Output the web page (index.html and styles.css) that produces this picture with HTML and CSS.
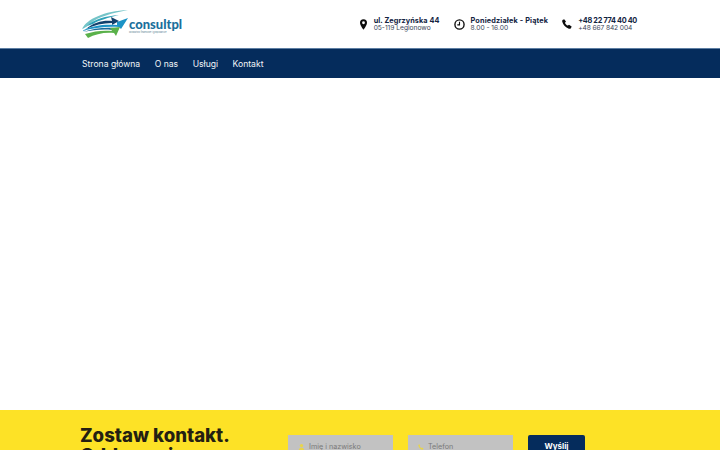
FILE: index.html
```html
<!DOCTYPE html>
<html lang="pl">
<head>
<meta charset="utf-8">
<title>consultpl</title>
<link rel="stylesheet" href="styles.css">
</head>
<body>
<header class="top">
  <a class="logo" href="#">
    <svg class="logo-mark" width="46" height="28" viewBox="0 0 46 28">
      <path d="M0 19C5 9 22 1 46 0C30 3 16 7 9 13C6 16 3 18 0 19Z" fill="#74c4c8"/>
      <path d="M5 16C12 9 24 6 37 5C26 8 17 10 11 14Z" fill="#2fa2b8"/>
      <path d="M4 19C12 12 22 10 30 11L29 7L37 11L30 15L30 13C21 13 12 15 4 19Z" fill="#12406c"/>
      <path d="M0 21C10 15 24 14 35 15L35 12L46 8L39 19L37 17C25 16 11 18 0 21Z" fill="#1c93c6"/>
      <path d="M1 22C11 18 24 17 33 18L30 20C21 19 11 20 1 22Z" fill="#1b6a98"/>
      <path d="M3 24C12 21 22 20 30 21L28 18L38 17L34 26L32 23C23 22 13 24 6 28C5 27 4 25 3 24Z" fill="#5ab14a"/>
    </svg>
    <span class="logo-text">
      <span class="logo-name">consultpl</span>
      <span class="logo-tag">doradztwo finansowe i gospodarcze</span>
    </span>
  </a>
  <div class="contacts">
    <div class="contact">
      <svg class="ico" width="7" height="11" viewBox="0 0 8 12"><path fill-rule="evenodd" d="M4 0a4 4 0 0 0-4 4c0 3 4 8 4 8s4-5 4-8a4 4 0 0 0-4-4Zm0 2.4a1.6 1.6 0 1 1 0 3.2 1.6 1.6 0 0 1 0-3.2Z" fill="#0d0d0d"/></svg>
      <div class="contact-text"><strong class="label label-first">ul. Zegrzyńska 44</strong><span>05-119 Legionowo</span></div>
    </div>
    <div class="contact">
      <svg class="ico" width="11" height="11" viewBox="0 0 12 12"><circle cx="6" cy="6" r="5" fill="none" stroke="#0d0d0d" stroke-width="1.5"/><path d="M6 3V6.4H3.6" fill="none" stroke="#0d0d0d" stroke-width="1.2"/></svg>
      <div class="contact-text"><strong class="label label-wide">Poniedziałek - Piątek</strong><span>8.00 - 16.00</span></div>
    </div>
    <div class="contact">
      <svg class="ico" width="10" height="10" viewBox="0 0 12 12"><path d="M2.6 .2 4.8 3 3.6 4.4C4.1 5.9 5.4 7.2 7.1 7.9L8.4 6.8l3.2 2.2-.9 2C10 11.7 9 11.8 8.2 11.6 4.4 10.6 1.3 7 .3 3.4.1 2.6.2 1.7.6 1.1Z" fill="#0d0d0d"/></svg>
      <div class="contact-text"><strong class="label label-tight">+48 22 774 40 40</strong><span class="sub-tight">+48 667 842 004</span></div>
    </div>
  </div>
</header>
<nav class="nav">
  <a href="#">Strona główna</a>
  <a href="#">O nas</a>
  <a href="#">Usługi</a>
  <a href="#">Kontakt</a>
</nav>
<main class="blank"></main>
<section class="cta">
  <h2 class="cta-title">Zostaw kontakt.<br>Oddzwonimy</h2>
  <form class="cta-form">
    <label class="field">
      <svg width="7" height="8" viewBox="0 0 10 10"><circle cx="5" cy="3" r="2.4" fill="#e8d44a"/><path d="M1 10c0-3 2-4 4-4s4 1 4 4Z" fill="#e8d44a"/></svg>
      <span>Imię i nazwisko</span>
    </label>
    <label class="field">
      <svg width="6" height="8" viewBox="0 0 12 12"><path d="M2.6 .6 4.4 3 3.4 4.4C3.9 5.9 5.2 7.4 6.9 8.1L8.2 7l2.6 1.9-.7 2C9.8 11.5 9 11.6 8.2 11.4 4.6 10.4 1.5 7 .7 3.4.5 2.6.6 1.9 1 1.3Z" fill="#e8d44a"/></svg>
      <span>Telefon</span>
    </label>
    <button class="send" type="button">Wyślij</button>
  </form>
</section>
</body>
</html>
```
FILE: styles.css
```css
* { box-sizing: border-box; }
html, body { margin: 0; height: 450px; overflow: hidden; background: #fff; }
body { font-family: "Inter", "Liberation Sans", sans-serif; color: #12233f; display: flex; flex-direction: column; }
a { text-decoration: none; color: inherit; }
.top { height: 48px; flex: none; display: flex; align-items: center; justify-content: space-between; padding: 0 83px 0 82px; }
.logo { display: flex; align-items: center; }
.logo-mark { display: block; }
.logo-text { display: flex; flex-direction: column; margin-left: 1px; margin-top: 4px; width: 54px; }
.logo-name { font-family: "Lato", sans-serif; font-weight: 900; font-size: 13px; line-height: 13px; color: #1c6f9c; }
.logo-tag { font-size: 2.2px; line-height: 3px; color: #5c7f94; white-space: nowrap; }
.contacts { display: flex; gap: 14px; }
.contact { display: flex; align-items: center; gap: 7px; }
.contact + .contact { gap: 6px; }
.ico { display: block; flex: none; }
.contact-text { display: flex; flex-direction: column; padding-top: 1px; }
.label { font-size: 7.3px; line-height: 7.5px; font-weight: 700; color: #12233f; white-space: nowrap; }
.label-first { letter-spacing: .08px; }
.label-wide { letter-spacing: .15px; }
.label-tight { letter-spacing: -.3px; }
.contact-text span { font-size: 6.65px; line-height: 7px; color: #3a4658; white-space: nowrap; }
.contact-text .sub-tight { letter-spacing: -.1px; }
.nav { height: 30px; flex: none; background: #052c5c; border-top: 1px solid #5d7ea3; display: flex; align-items: center; gap: 14.5px; padding-left: 82px; }
.nav a { color: #f2f5f8; font-size: 8.6px; }
.blank { height: 332px; flex: none; }
.cta { height: 200px; flex: none; background: #fde226; display: flex; padding: 15px 0 0 80px; }
.cta-title { width: 208px; margin: 0; font-family: "Inter", sans-serif; font-size: 18.6px; line-height: 20px; font-weight: 800; color: #241f12; }
.cta-form { display: flex; align-items: flex-start; padding-top: 10px; }
.field { width: 105px; height: 32px; margin-right: 15px; background: #c2c2c2; display: flex; align-items: flex-start; gap: 4px; padding: 7px 0 0 10px; font-size: 7.2px; color: #7a7a7a; }
.field svg { margin-top: 1px; flex: none; }
.send { width: 57px; height: 32px; border: 0; border-radius: 2px; background: #052c5c; color: #fff; font-family: inherit; font-size: 8px; font-weight: 700; padding: 0 0 10px; }
```
